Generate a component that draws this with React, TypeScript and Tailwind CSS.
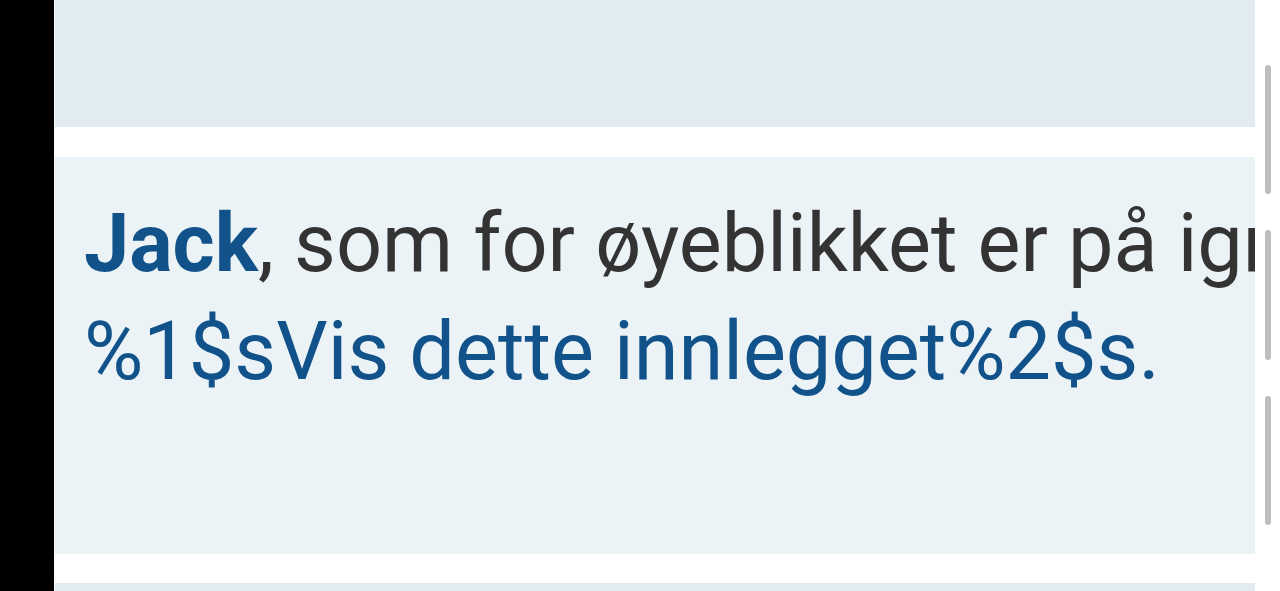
export default function App() {
  return (
    <div className="flex h-[591px] w-[1280px] overflow-hidden bg-white" style={{ fontFamily: "Roboto, 'Noto Sans', sans-serif" }}>
      <div className="w-[54px] shrink-0 bg-black" />
      <div className="flex w-[1201px] shrink-0 flex-col border-l border-[#f4f8fa]">
        <div className="h-[127px] shrink-0 bg-[#e1ebf2]" />
        <div className="h-[30px] shrink-0" />
        <div className="h-[397px] shrink-0 overflow-hidden bg-[#ecf3f7] pl-[29px] pt-[33px]">
          <div className="whitespace-nowrap text-[81px] leading-[108px] text-[#333333]">
            <span className="font-bold text-[#105289]">Jack</span>, som for øyeblikket er på ignorerlisten din, skrev dette innlegget.
          </div>
          <div className="whitespace-nowrap text-[81px] leading-[108px] text-[#105289]">%1$sVis dette innlegget%2$s.</div>
        </div>
        <div className="h-[29px] shrink-0" />
        <div className="flex-1 bg-[#e1ebf2]" />
      </div>
      <div className="flex flex-1 flex-col items-center pl-[1px]">
        <div className="mt-[65px] h-[129px] w-[6px] rounded-full bg-[#bdbdbd]" />
        <div className="mt-[36px] h-[130px] w-[6px] rounded-full bg-[#bdbdbd]" />
        <div className="mt-[36px] h-[129px] w-[6px] rounded-full bg-[#bdbdbd]" />
      </div>
    </div>
  );
}
